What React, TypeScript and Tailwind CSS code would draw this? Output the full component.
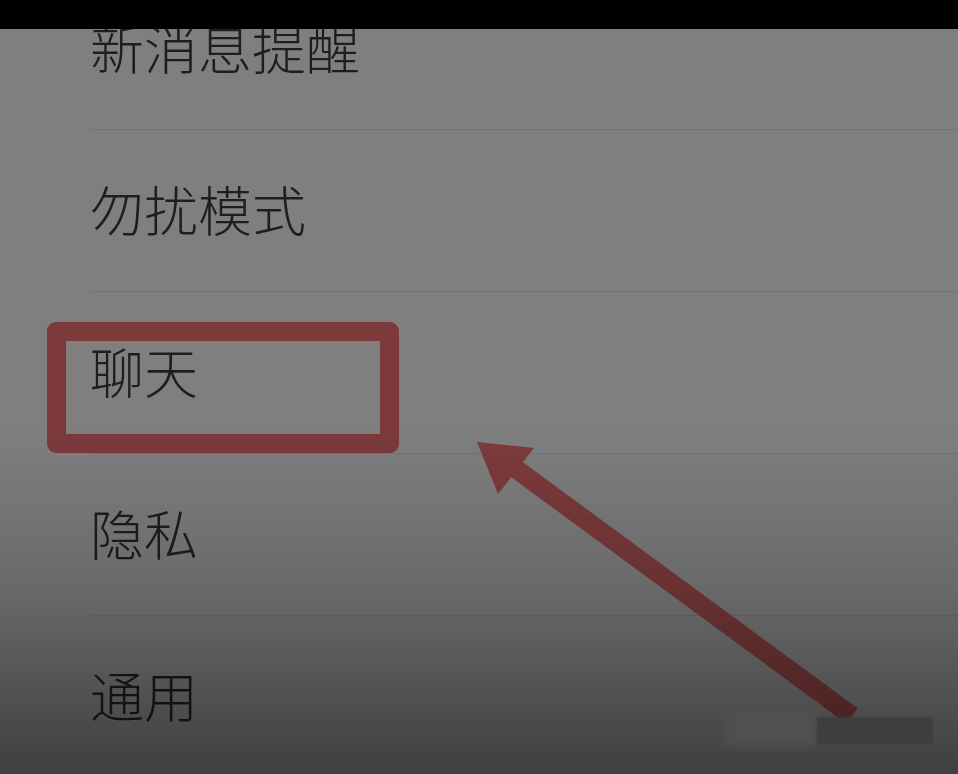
import React from 'react';

const items = ['新消息提醒', '勿扰模式', '聊天', '隐私', '通用'];

function Arrow() {
  return (
    <svg className="pointer-events-none absolute inset-0" width={958} height={774} viewBox="0 0 958 774">
      <line x1={512} y1={466} x2={852} y2={716} stroke="#7e3b3c" strokeWidth={19} />
      <polygon points="477,442 534,448 498,494" fill="#7e3b3c" />
    </svg>
  );
}

export default function App() {
  return (
    <div
      className="relative h-[774px] w-[958px] overflow-hidden bg-[#7f7f7f] text-[#1e1e1e]"
      style={{ fontFamily: '"Noto Sans CJK SC", "Noto Sans", sans-serif' }}
    >
      <div className="h-[29px] bg-black" />

      <div className="relative h-[745px] overflow-hidden">
        <div className="-mt-[61px] flex flex-col">
          {items.map((label) => (
            <div key={label}>
              <div className="flex h-[161px] items-center pb-[4px] pl-[90px] text-[54px] font-light leading-none">
                {label}
              </div>
              <div className="ml-[90px] h-px bg-[#737373]" />
            </div>
          ))}
        </div>
      </div>

      {/* annotation */}
      <div className="absolute left-[47px] top-[322px] h-[131px] w-[352px] rounded-[9px] border-[19px] border-[#7c3a3b]" />
      <Arrow />

      {/* dim at the bottom */}
      <div className="pointer-events-none absolute inset-0 bg-[linear-gradient(to_bottom,rgba(0,0,0,0)_0%,rgba(0,0,0,0)_55%,rgba(0,0,0,0.16)_75%,rgba(0,0,0,0.5)_100%)]" />

      {/* blurred watermark */}
      <div className="absolute left-[725px] top-[702px] h-[44px] w-[92px] bg-[#505050] blur-[4px]" />
      <div className="absolute left-[817px] top-[717px] h-[27px] w-[116px] bg-[#3e3e3e] blur-[1px]" />
    </div>
  );
}
